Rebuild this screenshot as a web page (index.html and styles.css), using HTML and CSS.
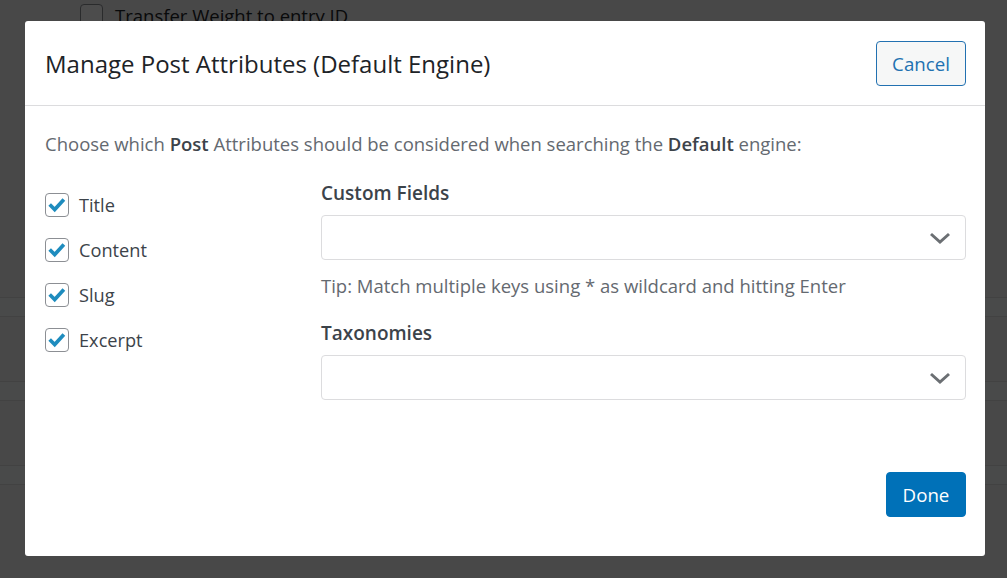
FILE: index.html
```html
<!DOCTYPE html>
<html lang="en">
<head>
    <meta charset="UTF-8">
    <meta name="viewport" content="width=device-width, initial-scale=1.0">
    <title>Manage Post Attributes</title>
    <link rel="stylesheet" href="styles.css">
</head>
<body>
    <!-- page behind the modal -->
    <div class="page">
        <div class="page-row">
            <span class="page-check"></span>
            <span>Transfer Weight to entry ID</span>
        </div>
        <div class="page-band page-band-first"></div>
        <div class="page-band"></div>
        <div class="page-band"></div>
    </div>

    <div class="overlay"></div>

    <div class="modal">
        <div class="modal-header">
            <h2 class="modal-title">Manage Post Attributes (Default Engine)</h2>
            <button class="btn btn-secondary">Cancel</button>
        </div>

        <div class="modal-body">
            <p class="intro">Choose which <strong>Post</strong> Attributes should be considered when searching the <strong>Default</strong> engine:</p>

            <div class="columns">
                <div class="attributes">
                    <label class="attr"><span class="checkbox"><svg viewBox="0 0 24 24" width="24" height="24"><path d="M4 11.5l5.5 5.5 10-11" fill="none" stroke="#1e8cbe" stroke-width="4"/></svg></span>Title</label>
                    <label class="attr"><span class="checkbox"><svg viewBox="0 0 24 24" width="24" height="24"><path d="M4 11.5l5.5 5.5 10-11" fill="none" stroke="#1e8cbe" stroke-width="4"/></svg></span>Content</label>
                    <label class="attr"><span class="checkbox"><svg viewBox="0 0 24 24" width="24" height="24"><path d="M4 11.5l5.5 5.5 10-11" fill="none" stroke="#1e8cbe" stroke-width="4"/></svg></span>Slug</label>
                    <label class="attr"><span class="checkbox"><svg viewBox="0 0 24 24" width="24" height="24"><path d="M4 11.5l5.5 5.5 10-11" fill="none" stroke="#1e8cbe" stroke-width="4"/></svg></span>Excerpt</label>
                </div>

                <div class="fields">
                    <div class="field">
                        <div class="field-label">Custom Fields</div>
                        <div class="select"><svg class="chevron" viewBox="0 0 22 12" width="22" height="12"><path d="M2 2l9 8 9-8" fill="none" stroke="#6b6f73" stroke-width="3"/></svg></div>
                        <div class="tip">Tip: Match multiple keys using * as wildcard and hitting Enter</div>
                    </div>
                    <div class="field">
                        <div class="field-label">Taxonomies</div>
                        <div class="select"><svg class="chevron" viewBox="0 0 22 12" width="22" height="12"><path d="M2 2l9 8 9-8" fill="none" stroke="#6b6f73" stroke-width="3"/></svg></div>
                    </div>
                </div>
            </div>

            <div class="modal-footer">
                <button class="btn btn-primary">Done</button>
            </div>
        </div>
    </div>
</body>
</html>
```

FILE: styles.css
```css
body {
    margin: 0;
    font-family: 'Open Sans', 'Noto Sans', sans-serif;
    background-color: #f0f0f1;
    color: #3c434a;
    height: 578px;
    overflow: hidden;
}

/* page behind the modal */
.page {
    padding-top: 3px;
}

.page-row {
    display: flex;
    align-items: center;
    gap: 12px;
    height: 24px;
    padding-left: 80px;
    font-size: 18.5px;
    color: #1d2327;
}

.page-check {
    width: 21px;
    height: 21px;
    border: 1px solid #8c8f94;
    border-radius: 4px;
    background: #fff;
}

.page-band {
    height: 18px;
    border-top: 1px solid #dcdcde;
    border-bottom: 1px solid #dcdcde;
    background: #f6f7f7;
    margin-top: 64px;
}

.page-band-first {
    margin-top: 270px;
}

.overlay {
    position: fixed;
    top: 0;
    left: 0;
    width: 100%;
    height: 100%;
    background-color: rgba(0, 0, 0, 0.7);
}

.modal {
    position: fixed;
    top: 21px;
    left: 25px;
    width: 960px;
    height: 535px;
    background-color: #fff;
    border-radius: 3px;
    display: flex;
    flex-direction: column;
}

.modal-header {
    display: flex;
    align-items: center;
    justify-content: space-between;
    height: 84px;
    padding: 0 19px 0 20px;
    border-bottom: 1px solid #dcdcde;
}

.modal-title {
    margin: 0;
    font-size: 24px;
    font-weight: 400;
    color: #1d2327;
}

.btn {
    font-family: inherit;
    font-size: 18.7px;
    height: 45px;
    border-radius: 4px;
    cursor: pointer;
}

.btn-secondary {
    width: 90px;
    background-color: #f6f7f7;
    border: 1px solid #2271b1;
    color: #2271b1;
}

.btn-primary {
    width: 80px;
    background-color: #0071b8;
    border: 1px solid #0071b8;
    color: #fff;
}

.modal-body {
    flex: 1;
    display: flex;
    flex-direction: column;
    padding: 0 19px 0 20px;
}

.intro {
    margin: 25px 0 0;
    font-size: 18.5px;
    line-height: 26px;
    color: #646970;
}

.intro strong {
    font-weight: 600;
    color: #3c434a;
}

.columns {
    display: flex;
    margin-top: 23px;
}

.attributes {
    width: 276px;
    display: flex;
    flex-direction: column;
    gap: 21px;
    padding-top: 13px;
}

.attr {
    display: flex;
    align-items: center;
    gap: 10px;
    height: 24px;
    font-size: 18.2px;
    color: #3c434a;
}

.checkbox {
    box-sizing: border-box;
    width: 24px;
    height: 24px;
    border: 1px solid #8c8f94;
    border-radius: 4px;
    display: flex;
    align-items: center;
    justify-content: center;
}

.fields {
    flex: 1;
    display: flex;
    flex-direction: column;
    gap: 21px;
}

.field-label {
    font-size: 19px;
    line-height: 26px;
    font-weight: 600;
    color: #3c434a;
    margin-bottom: 9px;
}

.select {
    box-sizing: border-box;
    height: 45px;
    border: 1px solid #dcdcde;
    border-radius: 4px;
    display: flex;
    align-items: center;
    justify-content: flex-end;
    padding-right: 14px;
}

.tip {
    margin-top: 13px;
    font-size: 18.5px;
    line-height: 26px;
    color: #646970;
}

.modal-footer {
    margin-top: auto;
    display: flex;
    justify-content: flex-end;
    padding-bottom: 39px;
}
```
